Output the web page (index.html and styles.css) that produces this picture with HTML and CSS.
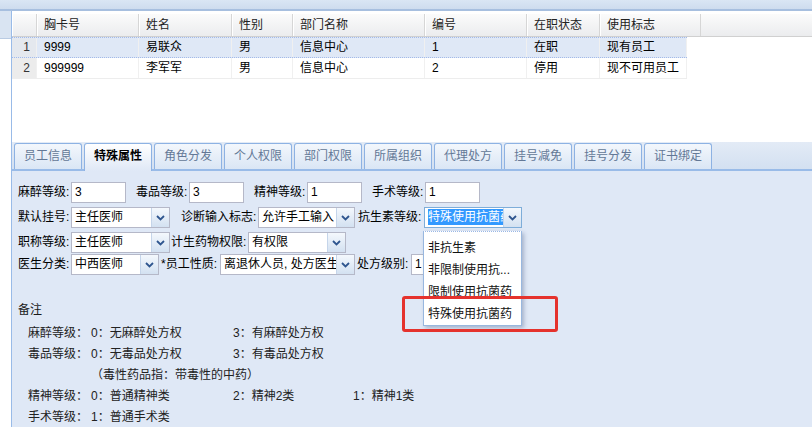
FILE: index.html
```html
<!DOCTYPE html>
<html>
<head>
  <meta charset="utf-8">
  <title>员工维护 - 特殊属性</title>
  <link rel="stylesheet" href="styles.css">
</head>
<body>
  <div class="topbar"></div>

  <div class="main">
    <div class="west">
      <div class="west-head"></div>
    </div>

    <div class="center">
      <!-- employee grid -->
      <div class="grid">
        <div class="grid-head">
          <div class="cell c-num"></div>
          <div class="cell c-card">胸卡号</div>
          <div class="cell c-name">姓名</div>
          <div class="cell c-sex">性别</div>
          <div class="cell c-dept">部门名称</div>
          <div class="cell c-no">编号</div>
          <div class="cell c-state">在职状态</div>
          <div class="cell c-flag">使用标志</div>
        </div>
        <div class="grid-row selected">
          <div class="cell c-num">1</div>
          <div class="cell c-card">9999</div>
          <div class="cell c-name">易联众</div>
          <div class="cell c-sex">男</div>
          <div class="cell c-dept">信息中心</div>
          <div class="cell c-no">1</div>
          <div class="cell c-state">在职</div>
          <div class="cell c-flag">现有员工</div>
        </div>
        <div class="grid-row">
          <div class="cell c-num">2</div>
          <div class="cell c-card">999999</div>
          <div class="cell c-name">李军军</div>
          <div class="cell c-sex">男</div>
          <div class="cell c-dept">信息中心</div>
          <div class="cell c-no">2</div>
          <div class="cell c-state">停用</div>
          <div class="cell c-flag">现不可用员工</div>
        </div>
      </div>

      <!-- tab panel -->
      <div class="tabpanel">
        <div class="tabstrip">
          <div class="tab">员工信息</div>
          <div class="tab active">特殊属性</div>
          <div class="tab">角色分发</div>
          <div class="tab">个人权限</div>
          <div class="tab">部门权限</div>
          <div class="tab">所属组织</div>
          <div class="tab">代理处方</div>
          <div class="tab">挂号减免</div>
          <div class="tab">挂号分发</div>
          <div class="tab">证书绑定</div>
        </div>

        <div class="tabbody">
          <div class="form-row">
            <label class="lbl w53">麻醉等级:</label>
            <div class="input w55">3</div>
            <label class="lbl w53 ml10">毒品等级:</label>
            <div class="input w55">3</div>
            <label class="lbl w53 ml10">精神等级:</label>
            <div class="input w55">1</div>
            <label class="lbl w53 ml10">手术等级:</label>
            <div class="input w55">1</div>
          </div>

          <div class="form-row">
            <label class="lbl w53">默认挂号:</label>
            <div class="combo w99">
              <div class="combo-text">主任医师</div>
              <div class="trigger"><svg width="9" height="6" viewBox="0 0 9 6"><path d="M1 1 L4.5 4.5 L8 1" fill="none" stroke="#2f568f" stroke-width="1.8"/></svg></div>
            </div>
            <label class="lbl w77 ml11">诊断输入标志:</label>
            <div class="combo w97">
              <div class="combo-text">允许手工输入</div>
              <div class="trigger"><svg width="9" height="6" viewBox="0 0 9 6"><path d="M1 1 L4.5 4.5 L8 1" fill="none" stroke="#2f568f" stroke-width="1.8"/></svg></div>
            </div>
            <label class="lbl w66 ml3">抗生素等级:</label>
            <div class="combo w98 focus">
              <div class="combo-text"><span class="sel">特殊使用抗菌药</span></div>
              <div class="trigger"><svg width="9" height="6" viewBox="0 0 9 6"><path d="M1 1 L4.5 4.5 L8 1" fill="none" stroke="#2f568f" stroke-width="1.8"/></svg></div>
            </div>
          </div>

          <div class="form-row">
            <label class="lbl w53">职称等级:</label>
            <div class="combo w99">
              <div class="combo-text">主任医师</div>
              <div class="trigger"><svg width="9" height="6" viewBox="0 0 9 6"><path d="M1 1 L4.5 4.5 L8 1" fill="none" stroke="#2f568f" stroke-width="1.8"/></svg></div>
            </div>
            <label class="lbl w77 ml1">计生药物权限:</label>
            <div class="combo w98">
              <div class="combo-text">有权限</div>
              <div class="trigger"><svg width="9" height="6" viewBox="0 0 9 6"><path d="M1 1 L4.5 4.5 L8 1" fill="none" stroke="#2f568f" stroke-width="1.8"/></svg></div>
            </div>
          </div>

          <div class="form-row last">
            <label class="lbl w53">医生分类:</label>
            <div class="combo w88">
              <div class="combo-text">中西医师</div>
              <div class="trigger"><svg width="9" height="6" viewBox="0 0 9 6"><path d="M1 1 L4.5 4.5 L8 1" fill="none" stroke="#2f568f" stroke-width="1.8"/></svg></div>
            </div>
            <label class="lbl w59 ml2">*员工性质:</label>
            <div class="combo w135">
              <div class="combo-text">离退休人员, 处方医生</div>
              <div class="trigger"><svg width="9" height="6" viewBox="0 0 9 6"><path d="M1 1 L4.5 4.5 L8 1" fill="none" stroke="#2f568f" stroke-width="1.8"/></svg></div>
            </div>
            <label class="lbl w54 ml2">处方级别:</label>
            <div class="combo w99">
              <div class="combo-text">1</div>
              <div class="trigger"><svg width="9" height="6" viewBox="0 0 9 6"><path d="M1 1 L4.5 4.5 L8 1" fill="none" stroke="#2f568f" stroke-width="1.8"/></svg></div>
            </div>
          </div>

          <div class="notes">
            <div class="notes-title">备注</div>
            <div class="notes-grid">
              <div>麻醉等级：</div><div>0：无麻醉处方权</div><div>3：有麻醉处方权</div><div></div>
              <div>毒品等级：</div><div>0：无毒品处方权</div><div>3：有毒品处方权</div><div></div>
              <div></div><div class="span3">（毒性药品指：带毒性的中药）</div>
              <div>精神等级：</div><div>0：普通精神类</div><div>2：精神2类</div><div>1：精神1类</div>
              <div>手术等级：</div><div>1：普通手术类</div><div></div><div></div>
            </div>
          </div>

          <!-- open combo list for 抗生素等级 -->
          <div class="dropdown">
            <div class="dd-item">非抗生素</div>
            <div class="dd-item">非限制使用抗...</div>
            <div class="dd-item">限制使用抗菌药</div>
            <div class="dd-item">特殊使用抗菌药</div>
          </div>

          <div class="mark"></div>
        </div>
      </div>
    </div>
  </div>
</body>
</html>
```

FILE: styles.css
```css
body {
  margin: 0;
  width: 812px;
  height: 427px;
  overflow: hidden;
  font-family: 'Liberation Sans', 'Noto Sans CJK SC', sans-serif;
  font-size: 12px;
  color: #000;
  background: #dfe8f6;
}

.topbar {
  height: 9px;
  background: linear-gradient(#dae6f4, #cedcee);
  border-bottom: 2px solid #a7bfdf;
}

.main {
  display: flex;
  height: 416px;
}

.west {
  width: 11px;
  background: #fff;
}

.west-head {
  height: 27px;
  background: #d9e4f2;
  border-bottom: 1px solid #b9cbe3;
}

.center {
  flex: 1;
  display: flex;
  flex-direction: column;
  border-left: 1px solid #99bbe8;
}

/* grid */
.grid {
  height: 129px;
  padding-top: 3px;
  background: #fff;
}

.grid-head {
  display: flex;
  height: 22px;
  background: linear-gradient(#fbfbfb, #ebecee);
  border-bottom: 1px solid #d0d0d0;
}

.grid-head .cell {
  line-height: 22px;
  border-right: 1px solid #d6d6d6;
  box-shadow: inset 1px 0 0 #fff;
  color: #222;
}

.grid-row {
  display: flex;
  width: 675px;
  height: 20px;
  border-bottom: 1px solid #ededed;
}

.grid-row .cell {
  line-height: 20px;
  border-right: 1px solid #f0f0f0;
}

.grid-row.selected {
  background: #dfe8f6;
  border-top: 1px dotted #a3bae9;
  border-bottom: 1px dotted #a3bae9;
  height: 19px;
}

.grid-row.selected .cell {
  line-height: 19px;
}

.cell {
  box-sizing: border-box;
  padding-left: 7px;
  white-space: nowrap;
  overflow: hidden;
}

.c-num { width: 25px; padding: 0 6px 0 0; text-align: right; color: #333; }
.grid-row .c-num { background: #ececec; }
.grid-row.selected .c-num { background: #e4e8ee; }
.c-card { width: 102px; }
.c-name { width: 93px; }
.c-sex { width: 61px; }
.c-dept { width: 132px; }
.c-no { width: 102px; }
.c-state { width: 73px; }
.c-flag { width: 101px; }
.grid-row .c-flag { width: 87px; }

/* tabs */
.tabpanel {
  flex: 1;
  display: flex;
  flex-direction: column;
}

.tabstrip {
  display: flex;
  gap: 2px;
  height: 26px;
  padding: 1px 0 0 2px;
  background: linear-gradient(#e3ebf6, #d3e0f1);
  border-bottom: 2px solid #99bbe8;
}

.tab {
  box-sizing: border-box;
  width: 68px;
  height: 26px;
  line-height: 25px;
  text-align: center;
  color: #637896;
  background: linear-gradient(#f3f7fc, #dae6f5);
  border: 1px solid #8db2e3;
  border-bottom: none;
  border-radius: 3px 3px 0 0;
}

.tab.active {
  height: 28px;
  margin-bottom: -2px;
  color: #000;
  font-weight: bold;
  background: linear-gradient(#ffffff, #dfe8f6);
}

.tabbody {
  position: relative;
  flex: 1;
  padding: 11px 0 0 6px;
}

/* form */
.form-row {
  display: flex;
  height: 21px;
  margin-bottom: 4px;
}

.form-row.last {
  margin-top: -3px;
}

.lbl {
  line-height: 21px;
  white-space: nowrap;
}

.w53 { width: 53px; }
.w54 { width: 54px; }
.w55 { width: 55px; }
.w59 { width: 59px; }
.w66 { width: 66px; }
.w77 { width: 77px; }
.w88 { width: 88px; }
.w97 { width: 97px; }
.w98 { width: 98px; }
.w99 { width: 99px; }
.w135 { width: 135px; }
.ml1 { margin-left: 1px; }
.ml2 { margin-left: 2px; }
.ml3 { margin-left: 3px; }
.ml10 { margin-left: 10px; }
.ml11 { margin-left: 11px; }

.input {
  box-sizing: border-box;
  height: 21px;
  line-height: 19px;
  padding-left: 3px;
  background: #fff;
  border: 1px solid #b5b8c8;
}

.combo {
  box-sizing: border-box;
  display: flex;
  height: 21px;
  background: #fff;
  border: 1px solid #b5b8c8;
}

.combo.focus {
  border-color: #7eadd9;
}

.combo-text {
  flex: 1;
  padding-left: 3px;
  line-height: 19px;
  white-space: nowrap;
  overflow: hidden;
}

.sel {
  background: #3399ff;
  color: #fff;
  padding: 1px 0;
}

.trigger {
  width: 17px;
  display: flex;
  align-items: center;
  justify-content: center;
  background: linear-gradient(#f4f8fd, #d3e1f1);
  border-left: 1px solid #c5d5ea;
}

/* notes */
.notes {
  margin-top: 25px;
  line-height: 20px;
  color: #1a1a1a;
}

.notes-title {
  margin-bottom: 2px;
}

.notes-grid {
  display: grid;
  grid-template-columns: 63px 142px 120px auto;
  grid-auto-rows: 21px;
  align-items: center;
  padding-left: 10px;
  color: #222;
}

.span3 {
  grid-column: span 3;
}

/* open combo list */
.dropdown {
  position: absolute;
  left: 411px;
  top: 60px;
  width: 99px;
  box-sizing: border-box;
  padding-top: 5px;
  background: #fff;
  border: 1px solid #98b7df;
  border-top: 1px dotted #9ab8e6;
  box-shadow: 2px 2px 4px rgba(60, 80, 120, 0.35);
}

.dd-item {
  height: 22px;
  line-height: 22px;
  padding-left: 4px;
  white-space: nowrap;
  color: #111;
}

.mark {
  position: absolute;
  left: 390px;
  top: 125px;
  width: 156px;
  height: 36px;
  box-sizing: border-box;
  border: 3px solid #e5322d;
  border-radius: 3px;
}
```
